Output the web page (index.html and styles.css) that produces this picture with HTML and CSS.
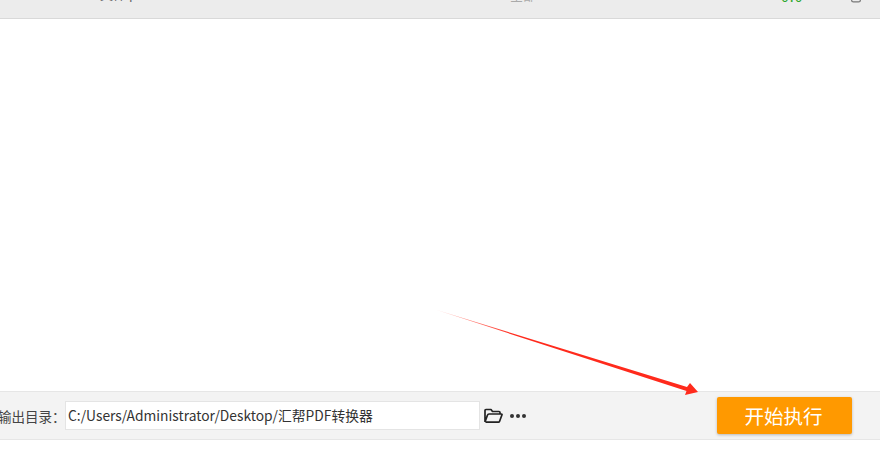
FILE: index.html
```html
<!DOCTYPE html>
<html lang="zh">
<head>
<meta charset="utf-8">
<title>汇帮PDF转换器</title>
<link rel="stylesheet" href="styles.css">
</head>
<body>
<div class="page">
  <header class="table-head">
    <span class="head-cell head-name">文件 p</span>
    <span class="head-cell head-range">全部</span>
    <span class="head-cell head-status">0.0</span>
    <svg class="head-icon" width="10" height="4" viewBox="0 0 10 4"><path d="M.7 0v.4q0 1.500 1.700 1.500h5.200q1.700 0 1.700-1.500V0" fill="none" stroke="#777" stroke-width="1.300"/></svg>
  </header>
  <main class="content">
    <svg class="arrow" width="270" height="90" viewBox="0 0 270 90">
      <defs>
        <linearGradient id="fade" gradientUnits="userSpaceOnUse" x1="0" y1="1" x2="80" y2="26">
          <stop offset="0" stop-color="#ff2a1c" stop-opacity=".3"/>
          <stop offset="1" stop-color="#ff2a1c"/>
        </linearGradient>
      </defs>
      <path d="M0 .8 L251 78 L254 74 L262 83 L249 86 L250.500 82 Z" fill="url(#fade)"/>
    </svg>
  </main>
  <footer class="bar">
    <label class="label">输出目录：</label>
    <div class="path">C:/Users/Administrator/Desktop/汇帮PDF转换器</div>
    <svg class="folder" width="19" height="16" viewBox="0 0 19 16">
      <path d="M1 14V2.500Q1 1.500 2 1.500H7L8.500 3.500H15Q16 3.500 16 4.500V6M1 14L3.500 7Q3.800 6 5 6H17.200Q18.300 6 17.900 7L15.500 13.500Q15.200 14.200 14.500 14.200H1.500" fill="none" stroke="#222" stroke-width="1.700" stroke-linejoin="round"/>
    </svg>
    <div class="dots"><i></i><i></i><i></i></div>
    <button class="start">开始执行</button>
  </footer>
  <div class="tail"></div>
</div>
</body>
</html>
```

FILE: styles.css
```css
* { box-sizing: border-box; }
html, body { margin: 0; padding: 0; }
body {
  width: 880px;
  height: 450px;
  overflow: hidden;
  background: #fff;
  font-family: "Noto Sans CJK SC", "Liberation Sans", sans-serif;
}
.page { display: flex; flex-direction: column; height: 450px; }
.table-head {
  height: 19px;
  flex: none;
  background: #ececec;
  border-bottom: 1px solid #d9d9d9;
  position: relative;
  overflow: hidden;
}
.head-cell { position: absolute; top: -15px; font-size: 13px; line-height: 18px; color: #666; }
.head-name { left: 100px; }
.head-range { left: 510px; top: -14px; color: #aaa; }
.head-status { left: 781px; top: -13px; color: #2fa82f; font-size: 14px; letter-spacing: 1px; }
.head-icon { position: absolute; left: 851px; top: 0; }
.content { flex: 1; position: relative; }
.arrow { position: absolute; left: 436px; top: 290px; }
.bar {
  height: 49px;
  flex: none;
  background: #f3f3f3;
  border-top: 1px solid #e6e6e6;
  border-bottom: 1px solid #e6e6e6;
  display: flex;
  align-items: center;
}
.label { width: 65px; flex: none; margin-left: -2px; font-size: 13.500px; color: #444; white-space: nowrap; }
.path {
  width: 415px;
  height: 29px;
  margin-left: 2px;
  flex: none;
  background: #fff;
  border: 1px solid #e4e4e4;
  padding-left: 2px;
  font-size: 13.8px;
  line-height: 27px;
  color: #333;
  white-space: nowrap;
}
.folder { margin-left: 4px; flex: none; }
.dots { display: flex; gap: 2px; margin-left: 7px; flex: none; }
.dots i { width: 4px; height: 4px; border-radius: 50%; background: #333; display: block; }
.start {
  width: 135px;
  height: 37px;
  margin-left: 191px;
  flex: none;
  border: 0;
  border-radius: 2px;
  background: #ff9900;
  box-shadow: 0 1px 3px rgba(0, 0, 0, .25);
  color: #fff;
  font-family: inherit;
  font-size: 19.500px;
  padding: 0 2px 0 0;
}
.tail { height: 10px; flex: none; background: #fff; }
```
